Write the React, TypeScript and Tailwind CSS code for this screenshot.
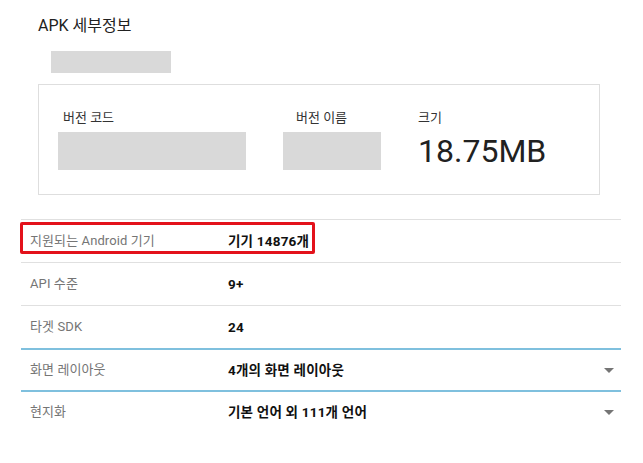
import React from 'react';

const ROWS = [
  { label: '지원되는 Android 기기', value: '기기 14876개', highlight: true },
  { label: 'API 수준', value: '9+' },
  { label: '타겟 SDK', value: '24' },
  { label: '화면 레이아웃', value: '4개의 화면 레이아웃', expandable: true },
  { label: '현지화', value: '기본 언어 외 111개 언어', expandable: true },
];

function Caret() {
  return (
    <svg width="10" height="5" viewBox="0 0 10 5" className="mr-[7px] shrink-0">
      <path d="M0 0 L10 0 L5 5 Z" fill="#757575" />
    </svg>
  );
}

export default function App() {
  return (
    <div
      className="w-[643px] h-[463px] bg-white overflow-hidden text-[#212121]"
      style={{ fontFamily: 'Roboto, "Noto Sans CJK KR", sans-serif' }}
    >
      {/* Header */}
      <div className="pl-[38px] pt-[14px] text-[16px] leading-6">APK 세부정보</div>
      <div className="ml-[51px] mt-[13px] w-[120px] h-[22px] bg-[#d9d9d9]" />

      {/* Summary box */}
      <div className="ml-[38px] mt-[11px] w-[562px] h-[111px] border border-[#dedede] flex pl-[19px] pt-[24px]">
        <div className="flex flex-col w-[188px]">
          <div className="pl-[5px] text-[13px] leading-[18px] text-[#333]">버전 코드</div>
          <div className="mt-[5px] h-[38px] bg-[#d9d9d9]" />
        </div>
        <div className="flex flex-col w-[98px] ml-[37px]">
          <div className="pl-[13px] text-[13px] leading-[18px] text-[#333]">버전 이름</div>
          <div className="mt-[5px] h-[38px] bg-[#d9d9d9]" />
        </div>
        <div className="flex flex-col ml-[37px]">
          <div className="text-[13px] leading-[18px] text-[#333]">크기</div>
          <div className="mt-[5px] h-[38px] text-[32px] leading-[38px] text-[#212121]">18.75MB</div>
        </div>
      </div>

      {/* Detail rows */}
      <div className="ml-[21px] mt-[24px] w-[600px]">
        {ROWS.map((row) => (
          <div
            key={row.label}
            className={
              row.expandable
                ? 'relative flex items-center h-[42px] border-t-2 border-[#7fc0de] pl-[9px]'
                : 'relative flex items-center h-[43px] border-t border-[#e0e0e0] pl-[9px]'
            }
          >
            <div className="w-[198px] text-[13px] tracking-[0.1px] text-[#757575]">{row.label}</div>
            <div className="flex-1 text-[13.5px] tracking-[0.2px] font-bold text-[#111]">{row.value}</div>
            {row.expandable && <Caret />}
            {row.highlight && (
              <div className="absolute left-[-1px] top-[2px] w-[295px] h-[32px] border-[3px] border-[#e3121b] rounded-[2px]" />
            )}
          </div>
        ))}
      </div>
    </div>
  );
}
